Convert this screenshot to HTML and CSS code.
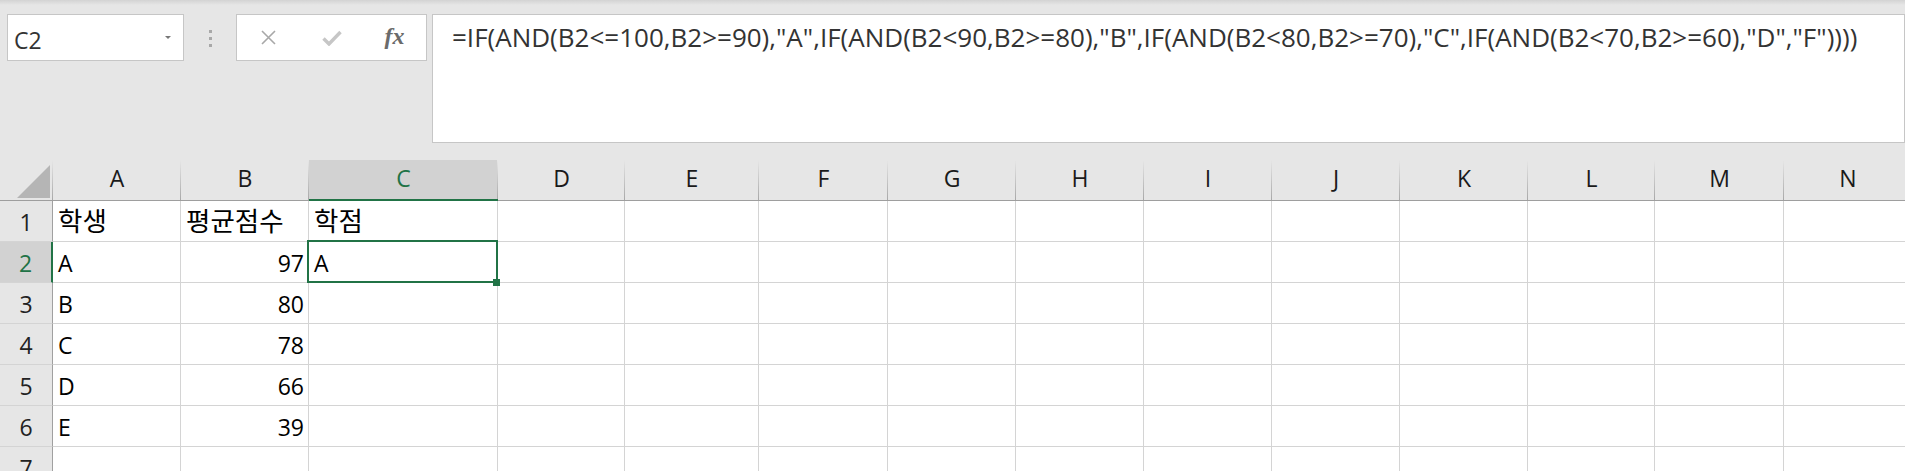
FILE: index.html
```html
<!DOCTYPE html>
<html lang="ko">
<head>
    <meta charset="UTF-8">
    <meta name="viewport" content="width=device-width, initial-scale=1.0">
    <title>학점 계산 - Excel</title>
    <link rel="stylesheet" href="styles.css">
</head>
<body>

<div class="formula-bar">
    <div class="name-box">
        <span class="name">C2</span>
        <span class="dropdown"></span>
    </div>
    <div class="grip">
        <span></span><span></span><span></span>
    </div>
    <div class="fx-box">
        <span class="fx-btn">
            <svg width="15" height="15" viewBox="0 0 15 15"><path d="M1 1 L14 14 M14 1 L1 14" stroke="#a8a8a8" stroke-width="1.6" fill="none"/></svg>
        </span>
        <span class="fx-btn">
            <svg width="20" height="16" viewBox="0 0 20 16"><path d="M1.5 8.5 L7 14 L18.5 2" stroke="#c6c6c6" stroke-width="3.4" fill="none"/></svg>
        </span>
        <span class="fx-btn fx">fx</span>
    </div>
    <div class="formula">=IF(AND(B2&lt;=100,B2&gt;=90),"A",IF(AND(B2&lt;90,B2&gt;=80),"B",IF(AND(B2&lt;80,B2&gt;=70),"C",IF(AND(B2&lt;70,B2&gt;=60),"D","F"))))</div>
</div>

<div class="sheet">
    <div class="row head">
        <div class="corner"><span></span></div>
        <div>A</div><div>B</div><div class="sel">C</div><div>D</div><div>E</div><div>F</div><div>G</div>
        <div>H</div><div>I</div><div>J</div><div>K</div><div>L</div><div>M</div><div>N</div>
    </div>
    <div class="row">
        <div class="rh">1</div>
        <div><span class="ko">학생</span></div><div><span class="ko">평균점수</span></div><div><span class="ko">학점</span></div>
        <div></div><div></div><div></div><div></div><div></div><div></div><div></div><div></div><div></div><div></div><div></div>
    </div>
    <div class="row">
        <div class="rh sel">2</div>
        <div>A</div><div class="num">97</div><div class="active">A</div>
        <div></div><div></div><div></div><div></div><div></div><div></div><div></div><div></div><div></div><div></div><div></div>
    </div>
    <div class="row">
        <div class="rh">3</div>
        <div>B</div><div class="num">80</div><div></div>
        <div></div><div></div><div></div><div></div><div></div><div></div><div></div><div></div><div></div><div></div><div></div>
    </div>
    <div class="row">
        <div class="rh">4</div>
        <div>C</div><div class="num">78</div><div></div>
        <div></div><div></div><div></div><div></div><div></div><div></div><div></div><div></div><div></div><div></div><div></div>
    </div>
    <div class="row">
        <div class="rh">5</div>
        <div>D</div><div class="num">66</div><div></div>
        <div></div><div></div><div></div><div></div><div></div><div></div><div></div><div></div><div></div><div></div><div></div>
    </div>
    <div class="row">
        <div class="rh">6</div>
        <div>E</div><div class="num">39</div><div></div>
        <div></div><div></div><div></div><div></div><div></div><div></div><div></div><div></div><div></div><div></div><div></div>
    </div>
    <div class="row">
        <div class="rh">7</div>
        <div></div><div></div><div></div>
        <div></div><div></div><div></div><div></div><div></div><div></div><div></div><div></div><div></div><div></div><div></div>
    </div>
</div>

</body>
</html>
```

FILE: styles.css
```css
/* base */
html, body {
    margin: 0;
    padding: 0;
    overflow: hidden;
}

body {
    font-family: "Open Sans", "Noto Sans CJK KR", sans-serif;
    background-color: #e6e6e6;
    color: #000;
}

/* formula bar */
.formula-bar {
    display: flex;
    align-items: flex-start;
    height: 160px;
    padding: 14px 0 0 7px;
    box-sizing: border-box;
    background: linear-gradient(#d3d3d3, #e6e6e6 5px);
}

.name-box {
    display: flex;
    width: 177px;
    height: 47px;
    padding-left: 6px;
    box-sizing: border-box;
    background-color: #fff;
    border: 1px solid #c6c6c6;
}

.name-box .name {
    margin-top: 10px;
    font-size: 23px;
    line-height: 30px;
    color: #333;
}

.name-box .dropdown {
    margin: 21px 12px 0 auto;
    width: 0;
    height: 0;
    border-left: 3px solid transparent;
    border-right: 3px solid transparent;
    border-top: 3px solid #777;
}

.grip {
    display: flex;
    flex-direction: column;
    align-items: center;
    gap: 4px;
    width: 52px;
    padding-top: 16px;
}

.grip span {
    width: 3px;
    height: 3px;
    background-color: #a8a8a8;
}

.fx-box {
    display: flex;
    width: 191px;
    height: 47px;
    box-sizing: border-box;
    background-color: #fff;
    border: 1px solid #c6c6c6;
}

.fx-btn {
    display: flex;
    align-items: center;
    justify-content: center;
    width: 63px;
}

.fx-btn.fx {
    font-family: "Liberation Serif", serif;
    font-style: italic;
    font-weight: bold;
    font-size: 24px;
    color: #6b6b6b;
    padding-bottom: 3px;
    box-sizing: border-box;
}

.formula {
    flex: 1;
    height: 129px;
    margin-left: 5px;
    padding: 4px 0 0 19px;
    box-sizing: border-box;
    background-color: #fff;
    border: 1px solid #c6c6c6;
    font-size: 26px;
    line-height: 36px;
    color: #333;
    white-space: nowrap;
    overflow: hidden;
}

/* sheet grid */
.row {
    display: grid;
    grid-template-columns: 53px 128px 128px 189px 127px 134px 129px 128px 128px 128px 128px 128px 127px 129px 128px;
    height: 41px;
    background-color: #fff;
}

.row > div {
    box-sizing: border-box;
    border-right: 1px solid #d4d4d4;
    border-bottom: 1px solid #d4d4d4;
    padding: 2px 5px 0;
    font-size: 23px;
    line-height: 38px;
    white-space: nowrap;
    overflow: hidden;
}

.row > .num {
    text-align: right;
    padding-right: 4px;
}

.ko {
    font-family: "Noto Sans CJK KR", sans-serif;
    font-size: 26.5px;
    line-height: 0;
}

.row > .rh {
    padding: 2px 0 0;
    text-align: center;
    color: #222;
    background-color: #e6e6e6;
    border-right-color: #a0a0a0;
}

.row > .rh.sel {
    background-color: #d2d2d2;
    color: #217346;
    border-right: 2px solid #217346;
}

.row > .active {
    position: relative;
    overflow: visible;
}

.row > .active::before {
    content: "";
    position: absolute;
    left: -2px;
    top: -2px;
    right: -1px;
    bottom: -1px;
    border: 2px solid #217346;
}

.row > .active::after {
    content: "";
    position: absolute;
    right: -3px;
    bottom: -4px;
    width: 7px;
    height: 7px;
    background-color: #217346;
}

/* column headers */
.head {
    background-color: #e6e6e6;
}

.head > div {
    padding: 0;
    border-right: none;
    border-bottom: 1px solid #9e9e9e;
    text-align: center;
    line-height: 36px;
    color: #1a1a1a;
    background: linear-gradient(#e6e6e6, #a8a8a8) right / 1px 100% no-repeat, #e6e6e6;
}

.head > .sel {
    color: #217346;
    border-bottom: 2px solid #217346;
    background: linear-gradient(#e6e6e6, #a8a8a8) right / 1px 100% no-repeat, #d2d2d2;
}

.head > .corner {
    display: flex;
    justify-content: flex-end;
    align-items: flex-end;
    padding: 0 3px 2px 0;
}

.corner span {
    width: 33px;
    height: 33px;
    background-color: #b5b5b5;
    clip-path: polygon(100% 0, 100% 100%, 0 100%);
}
```
